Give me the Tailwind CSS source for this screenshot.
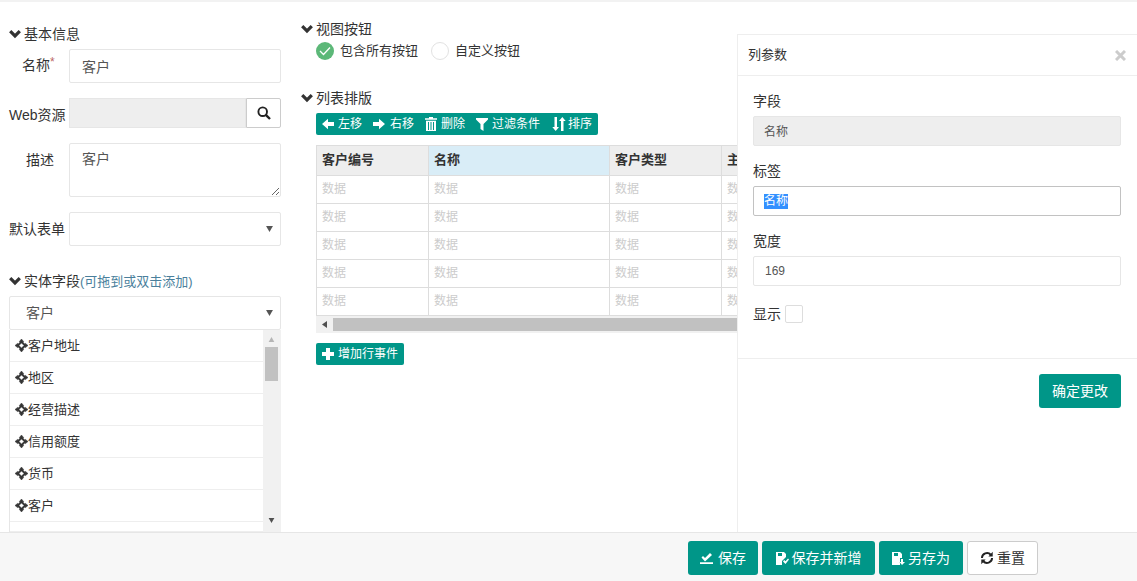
<!DOCTYPE html>
<html lang="zh-CN">

<head>
    <meta charset="UTF-8" />
    <title>列表视图</title>
    <script src="https://cdn.jsdelivr.net/npm/@tailwindcss/browser@4"></script>
</head>

<body class="relative h-[581px] w-[1137px] overflow-hidden bg-white font-['Liberation_Sans','Noto_Sans_CJK_SC',sans-serif] text-[14px] text-[#333]">

    <svg class="hidden">
        <symbol id="chevron" viewBox="0 0 12 10"><path d="M1.200 2.200 6 7 10.800 2.200" fill="none" stroke="currentColor" stroke-width="3.200" /></symbol>
        <symbol id="move" viewBox="0 0 14 14"><path d="M7 0 9.500 3H8.200L11 5.800V4.500L14 7 11 9.500V8.200L8.200 11H9.500L7 14 4.500 11H5.800L3 8.200V9.500L0 7 3 4.500V5.800L5.800 3H4.500ZM7 4.300 4.300 7 7 9.700 9.700 7Z" fill="#333" fill-rule="evenodd" stroke="#333" stroke-width=".5" /></symbol>
        <symbol id="caret" viewBox="0 0 8 7"><path d="M0 0H8L4 7Z" fill="currentColor" /></symbol>
    </svg>

    <main class="flex h-[532px] border-t-2 border-[#f2f2f2] pl-[9px]">
        <!-- left column -->
        <section class="w-[272px] shrink-0">
            <h3 class="mt-[22px] flex h-5 items-center gap-[3px] font-normal"><svg class="h-[10px] w-3 text-[#333]"><use href="#chevron" /></svg>基本信息</h3>
            <div class="mt-[5px] flex h-[34px]">
                <label class="w-[60px] pt-[6px] pr-[19px] text-right"><span class="relative">名称<span class="absolute top-[-4px] text-[12px] text-[#b66]">*</span></span></label>
                <input class="h-[34px] w-[212px] rounded-[2px] border border-[#e6e6e6] px-[12px] text-[#555]" value="客户" />
            </div>
            <div class="mt-[15px] flex h-[30px]">
                <label class="w-[60px] pt-[7px] whitespace-nowrap">Web资源</label>
                <div class="h-[30px] w-[177px] border border-[#e6e6e6] bg-[#eee]"></div>
                <button class="flex h-[30px] w-[35px] items-center justify-center rounded-r-[2px] border border-[#ccc] bg-white">
                    <svg class="h-[14px] w-[14px]" viewBox="0 0 14 14"><circle cx="5.700" cy="5.700" r="4.300" fill="none" stroke="#222" stroke-width="1.900" /><path d="M8.800 8.800 13 13" stroke="#222" stroke-width="2.400" /></svg>
                </button>
            </div>
            <div class="mt-[15px] flex h-[54px]">
                <label class="w-[60px] pt-[7px] pr-[15px] text-right">描述</label>
                <textarea class="h-[54px] w-[212px] rounded-[2px] border border-[#e6e6e6] px-[12px] py-[5px] text-[#555]">客户</textarea>
            </div>
            <div class="mt-[15px] flex h-[34px]">
                <label class="w-[60px] pt-[7px] whitespace-nowrap">默认表单</label>
                <div class="flex h-[34px] w-[212px] items-center justify-end rounded-[2px] border border-[#e6e6e6] pr-[7px] text-[#555]"><svg class="h-[6px] w-[7px]"><use href="#caret" /></svg></div>
            </div>
            <h3 class="mt-[25px] flex h-5 items-center gap-[3px] font-normal"><svg class="h-[10px] w-3"><use href="#chevron" /></svg><span>实体字段<span class="text-[13px] text-[#4a7f9c]">(可拖到或双击添加)</span></span></h3>
            <div class="mt-[5px] flex h-[34px] items-center justify-between rounded-[2px] border border-[#e6e6e6] pr-[7px] pl-4 text-[#555]">客户<svg class="h-[6px] w-[7px]"><use href="#caret" /></svg></div>
            <div class="flex h-[202px] overflow-hidden border-l border-[#e6e6e6] text-[13px]">
                <ul class="flex-1">
                    <li class="flex h-8 items-center border-b-[1.500px] border-[#eee] pl-[5px]"><svg class="h-[13px] w-[13px]"><use href="#move" /></svg>客户地址</li>
                    <li class="flex h-8 items-center border-b-[1.500px] border-[#eee] pl-[5px]"><svg class="h-[13px] w-[13px]"><use href="#move" /></svg>地区</li>
                    <li class="flex h-8 items-center border-b-[1.500px] border-[#eee] pl-[5px]"><svg class="h-[13px] w-[13px]"><use href="#move" /></svg>经营描述</li>
                    <li class="flex h-8 items-center border-b-[1.500px] border-[#eee] pl-[5px]"><svg class="h-[13px] w-[13px]"><use href="#move" /></svg>信用额度</li>
                    <li class="flex h-8 items-center border-b-[1.500px] border-[#eee] pl-[5px]"><svg class="h-[13px] w-[13px]"><use href="#move" /></svg>货币</li>
                    <li class="flex h-8 items-center border-b-[1.500px] border-[#eee] pl-[5px]"><svg class="h-[13px] w-[13px]"><use href="#move" /></svg>客户</li>
                    <li class="h-[10px] border-b border-[#eee]"></li>
                </ul>
                <div class="flex w-[18px] flex-col items-center bg-[#f1f1f1] pr-[1px]">
                    <svg class="mt-[7px] h-[5px] w-[7px] rotate-180 text-[#b5b5b5]"><use href="#caret" /></svg>
                    <div class="mt-[5px] h-[34px] w-[13px] bg-[#c1c1c1]"></div>
                    <svg class="mt-[137px] h-[5px] w-[7px] text-[#505050]"><use href="#caret" /></svg>
                </div>
            </div>
        </section>

        <!-- middle column, runs on underneath the panel -->
        <section class="ml-5 min-w-0 flex-1">
            <h3 class="mt-[17px] flex h-5 items-center gap-[3px] font-normal"><svg class="h-[10px] w-3"><use href="#chevron" /></svg>视图按钮</h3>
            <div class="mt-[3px] ml-[15px] flex h-[18px] items-center text-[13px]">
                <span class="flex h-[18px] w-[18px] items-center justify-center rounded-full bg-[#5cb878]"><svg class="h-[10px] w-3" viewBox="0 0 12 10"><path d="M1 5 4.500 8.500 11 1.500" fill="none" stroke="#fff" stroke-width="1.300" /></svg></span>
                <span class="ml-[6px]">包含所有按钮</span>
                <span class="ml-[13px] h-[18px] w-[18px] rounded-full border border-[#e2e2e2]"></span>
                <span class="ml-[6px]">自定义按钮</span>
            </div>
            <h3 class="mt-[28px] flex h-5 items-center gap-[3px] font-normal"><svg class="h-[10px] w-3"><use href="#chevron" /></svg>列表排版</h3>
            <div class="mt-[5px] ml-[15px] flex h-[22px] w-[282px] items-center rounded-[2px] bg-[#009688] pl-[6px] text-[12px] whitespace-nowrap text-white">
                <svg class="h-3 w-3" viewBox="0 0 12 12"><path d="M0 6 6 .8V4H12V8H6V11.200Z" fill="#fff" /></svg><span class="ml-[4px]">左移</span>
                <svg class="ml-[11px] h-3 w-3" viewBox="0 0 12 12"><path d="M12 6 6 .8V4H0V8H6V11.200Z" fill="#fff" /></svg><span class="ml-[5px]">右移</span>
                <svg class="ml-[11px] h-[14px] w-[12px]" viewBox="0 0 12 14"><path d="M4 0H8V1.300H12V2.800H0V1.300H4ZM1 3.800H11V14H1ZM3 5V13H4V5ZM5.500 5V13H6.500V5ZM8 5V13H9V5Z" fill="#fff" fill-rule="evenodd" /></svg><span class="ml-[4px]">删除</span>
                <svg class="ml-[11px] h-[14px] w-[12px]" viewBox="0 0 12 14"><path d="M0 1H12V2.500L7.500 7V14L4.500 12V7L0 2.500Z" fill="#fff" /></svg><span class="ml-[4px]">过滤条件</span>
                <svg class="ml-[12px] h-[14px] w-[14px]" viewBox="0 0 14 14"><path d="M2.500 0H5V10H7L3.700 14 .3 10H2.500ZM9 14H11.500V4H13.700L10.300 0 7 4H9Z" fill="#fff" /></svg><span class="ml-[2px]">排序</span>
            </div>
            <div class="mt-[10px] ml-[15px] w-[421px] overflow-hidden">
                <table class="w-[560px] table-fixed border-collapse text-[12px] text-[#ccc]">
                    <colgroup><col class="w-[112px]" /><col class="w-[181px]" /><col class="w-[112px]" /><col class="w-[155px]" /></colgroup>
                    <thead class="text-[13px] text-[#333]">
                        <tr class="h-[30px]">
                            <th class="border border-[#ddd] bg-[#eee] pb-[2px] pl-[5px] text-left">客户编号</th>
                            <th class="border border-[#ddd] bg-[#d9edf7] pb-[2px] pl-[5px] text-left">名称</th>
                            <th class="border border-[#ddd] bg-[#eee] pb-[2px] pl-[5px] text-left">客户类型</th>
                            <th class="border border-[#ddd] bg-[#eee] pb-[2px] pl-[5px] text-left">主要联系人</th>
                        </tr>
                    </thead>
                    <tbody>
                        <tr class="h-7"><td class="border border-[#ddd] pb-[2px] pl-[5px]">数据</td><td class="border border-[#ddd] pb-[2px] pl-[5px]">数据</td><td class="border border-[#ddd] pb-[2px] pl-[5px]">数据</td><td class="border border-[#ddd] pb-[2px] pl-[5px]">数据</td></tr>
                        <tr class="h-7"><td class="border border-[#ddd] pb-[2px] pl-[5px]">数据</td><td class="border border-[#ddd] pb-[2px] pl-[5px]">数据</td><td class="border border-[#ddd] pb-[2px] pl-[5px]">数据</td><td class="border border-[#ddd] pb-[2px] pl-[5px]">数据</td></tr>
                        <tr class="h-7"><td class="border border-[#ddd] pb-[2px] pl-[5px]">数据</td><td class="border border-[#ddd] pb-[2px] pl-[5px]">数据</td><td class="border border-[#ddd] pb-[2px] pl-[5px]">数据</td><td class="border border-[#ddd] pb-[2px] pl-[5px]">数据</td></tr>
                        <tr class="h-7"><td class="border border-[#ddd] pb-[2px] pl-[5px]">数据</td><td class="border border-[#ddd] pb-[2px] pl-[5px]">数据</td><td class="border border-[#ddd] pb-[2px] pl-[5px]">数据</td><td class="border border-[#ddd] pb-[2px] pl-[5px]">数据</td></tr>
                        <tr class="h-7"><td class="border border-[#ddd] pb-[2px] pl-[5px]">数据</td><td class="border border-[#ddd] pb-[2px] pl-[5px]">数据</td><td class="border border-[#ddd] pb-[2px] pl-[5px]">数据</td><td class="border border-[#ddd] pb-[2px] pl-[5px]">数据</td></tr>
                    </tbody>
                </table>
                <div class="flex h-[17px] w-[560px] items-center bg-[#f1f1f1]">
                    <svg class="ml-[6px] h-[7px] w-[5px]" viewBox="0 0 5 7"><path d="M5 0V7L0 3.500Z" fill="#505050" /></svg>
                    <div class="ml-[6px] h-[13px] flex-1 bg-[#c1c1c1]"></div>
                </div>
            </div>
            <button class="mt-[10px] ml-[15px] flex h-[22px] w-[88px] items-center rounded-[2px] bg-[#009688] pl-[6px] text-[12px] whitespace-nowrap text-white">
                <svg class="mr-[4px] h-3 w-3" viewBox="0 0 12 12"><path d="M4 0H8V4H12V8H8V12H4V8H0V4H4Z" fill="#fff" /></svg>增加行事件
            </button>
        </section>
    </main>

    <!-- column settings panel, floats over the table -->
    <aside class="absolute top-[34px] right-0 h-[498px] w-[400px] border-t border-l border-[#eee] bg-white">
        <header class="flex h-[41px] items-center justify-between border-b-[1.500px] border-[#eee] pr-[11px] pl-[10px] text-[13px]">
            <span>列参数</span>
            <svg class="h-[11px] w-[11px]" viewBox="0 0 11 11"><path d="M1 1 10 10M10 1 1 10" stroke="#ccc" stroke-width="3" /></svg>
        </header>
        <div class="h-[283px] border-b-[1.500px] border-[#eee] pr-4 pl-[15px]">
            <label class="block pt-[15px] leading-5">字段</label>
            <div class="mt-[5px] flex h-[30px] items-center rounded-[2px] border border-[#e6e6e6] bg-[#eee] pt-[1px] pl-[10px] text-[12px] text-[#555]">名称</div>
            <label class="mt-[15px] block leading-5">标签</label>
            <div class="mt-[5px] flex h-[30px] items-center rounded-[2px] border border-[#c2c2c2] pl-[10px] text-[12px] leading-[15px]"><span class="bg-[#3390ff] text-white">名称</span></div>
            <label class="mt-[15px] block leading-5">宽度</label>
            <input class="mt-[5px] block h-[30px] w-full rounded-[2px] border border-[#e6e6e6] pl-[11px] text-[12px] text-[#555]" value="169" />
            <div class="mt-[19px] flex h-[18px] items-center gap-1">显示<span class="h-[18px] w-[18px] rounded-[2px] border border-[#ddd]"></span></div>
        </div>
        <div class="flex justify-end pt-[15px] pr-4">
            <button class="h-[34px] w-[82px] rounded-[3px] bg-[#009688] text-white">确定更改</button>
        </div>
    </aside>

    <footer class="flex h-[49px] items-start justify-end gap-1 border-t border-[#e6e6e6] bg-[#f7f7f7] pt-2 pr-[99px]">
        <button class="flex h-[34px] w-[70px] items-center justify-center gap-[5px] rounded-[3px] bg-[#009688] text-white">
            <svg class="h-3 w-[13px]" viewBox="0 0 13 12"><path d="M1.500 5.500 3 4 5 6 10 1 12 3 5 9.500ZM0 10.200H13V12H0Z" fill="#fff" /></svg>保存
        </button>
        <button class="flex h-[34px] w-[113px] items-center justify-center gap-[3px] rounded-[3px] bg-[#009688] text-white">
            <svg class="h-[13px] w-[13px]" viewBox="0 0 13 13"><path d="M0 0H8L10 2V5L6 9V13H0ZM2 1V4H6V1ZM7 9.500 8.200 8 9.500 9.200 12 6.500 13 7.500 9.500 12Z" fill="#fff" fill-rule="evenodd" /></svg>保存并新增
        </button>
        <button class="flex h-[34px] w-[84px] items-center justify-center gap-[3px] rounded-[3px] bg-[#009688] text-white">
            <svg class="h-[13px] w-[13px]" viewBox="0 0 13 13"><path d="M0 0H8L10 2V6H8V13H0ZM2 1V4H6V1ZM9 7H11V10H13L10 13 7.500 10H9Z" fill="#fff" fill-rule="evenodd" /></svg>另存为
        </button>
        <button class="flex h-[34px] w-[71px] items-center justify-center gap-[3px] rounded-[3px] border border-[#ccc] bg-white">
            <svg class="h-[14px] w-[14px]" viewBox="0 0 13 13"><path d="M1.800 6.500A4.700 4.700 0 0 1 10 3.500M11.200 6.500A4.700 4.700 0 0 1 3 9.500" fill="none" stroke="#222" stroke-width="1.800" /><path d="M11.800 .8V5H7.800ZM1.200 12.200V8H5.200Z" fill="#222" /></svg>重置
        </button>
    </footer>

</body>

</html>
